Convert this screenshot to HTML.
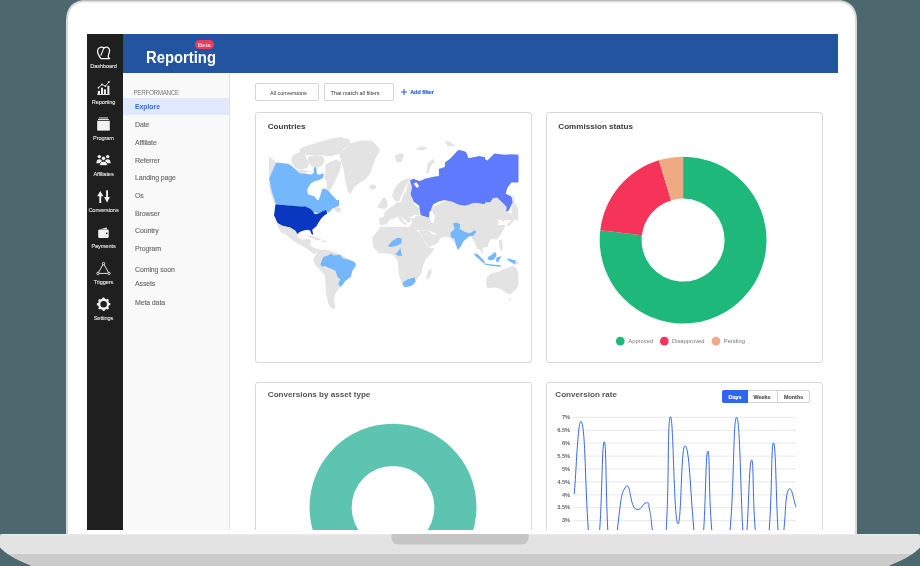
<!DOCTYPE html>
<html><head><meta charset="utf-8">
<style>
*{margin:0;padding:0;box-sizing:border-box}
html,body{width:920px;height:566px;overflow:hidden;background:#4c676e;font-family:"Liberation Sans",sans-serif}
.abs{position:absolute}
.t{position:absolute;white-space:pre}
#scr{position:absolute;left:0;top:0;width:920px;height:566px;clip-path:inset(34px 82px 36px 87px);will-change:transform}
</style></head>
<body>
<svg class="abs" style="left:0;top:0" width="920" height="566">
<path d="M67,536 L67,21 Q67,1 87,1 L836,1 Q856,1 856,21 L856,536" fill="#fff" stroke="#d8d8d8" stroke-width="2"/>
<defs><linearGradient id="tg" x1="0" y1="0" x2="0" y2="1"><stop offset="0" stop-color="#a6a6a6"/><stop offset="0.45" stop-color="#dadada"/><stop offset="1" stop-color="#fafafa"/></linearGradient></defs><rect x="84" y="0" width="755" height="3" fill="url(#tg)"/>
<defs><clipPath id="bc"><path d="M2,534 L918,534 Q920,534 920,536 L920,547.6 C915,553 906,559 888,566 L32,566 C14,559 5,553 0,547.6 L0,536 Q0,534 2,534 Z"/></clipPath></defs>
<g clip-path="url(#bc)">
<rect x="0" y="534" width="920" height="32" fill="#e3e3e3"/>
<rect x="0" y="554" width="920" height="12" fill="#cbcbcb"/>
<rect x="0" y="534" width="920" height="1" fill="#ebebeb"/><rect x="0" y="552.8" width="920" height="1.2" fill="#e6e6e6"/>
</g>
<path d="M391.5,534 L528.5,534 L528.5,537 Q528.5,544.5 521,544.5 L399,544.5 Q391.5,544.5 391.5,537 Z" fill="#c5c5c5"/>
</svg>
<div id="scr">
<div class="abs" style="left:87px;top:34px;width:751px;height:496px;background:#fff"></div>
<div class="abs" style="left:87px;top:34px;width:36px;height:496px;background:#1f1f1f"></div>
<div class="abs" style="left:123px;top:34px;width:715px;height:38.5px;background:#23549f"></div>
<div class="abs" style="left:123px;top:72.5px;width:107px;height:460px;background:#f9f9f9;border-right:1px solid #e3e3e3"></div>
<div class="abs" style="left:123px;top:98px;width:106px;height:16.8px;background:#dfe9fb"></div>
<div class="t" style="left:103.50px;transform:translateX(-50%);top:63.56px;font-size:5.6px;line-height:5.6px;font-weight:normal;color:#e6e6e6;letter-spacing:-0.08px;-webkit-text-stroke:0.1px #e6e6e6">Dashboard</div>
<div class="t" style="left:103.50px;transform:translateX(-50%);top:99.56px;font-size:5.6px;line-height:5.6px;font-weight:normal;color:#e6e6e6;letter-spacing:-0.08px;-webkit-text-stroke:0.1px #e6e6e6">Reporting</div>
<div class="t" style="left:103.50px;transform:translateX(-50%);top:135.56px;font-size:5.6px;line-height:5.6px;font-weight:normal;color:#e6e6e6;letter-spacing:-0.08px;-webkit-text-stroke:0.1px #e6e6e6">Program</div>
<div class="t" style="left:103.50px;transform:translateX(-50%);top:171.56px;font-size:5.6px;line-height:5.6px;font-weight:normal;color:#e6e6e6;letter-spacing:-0.08px;-webkit-text-stroke:0.1px #e6e6e6">Affiliates</div>
<div class="t" style="left:103.50px;transform:translateX(-50%);top:207.56px;font-size:5.6px;line-height:5.6px;font-weight:normal;color:#e6e6e6;letter-spacing:-0.08px;-webkit-text-stroke:0.1px #e6e6e6">Conversions</div>
<div class="t" style="left:103.50px;transform:translateX(-50%);top:243.56px;font-size:5.6px;line-height:5.6px;font-weight:normal;color:#e6e6e6;letter-spacing:-0.08px;-webkit-text-stroke:0.1px #e6e6e6">Payments</div>
<div class="t" style="left:103.50px;transform:translateX(-50%);top:279.56px;font-size:5.6px;line-height:5.6px;font-weight:normal;color:#e6e6e6;letter-spacing:-0.08px;-webkit-text-stroke:0.1px #e6e6e6">Triggers</div>
<div class="t" style="left:103.50px;transform:translateX(-50%);top:315.56px;font-size:5.6px;line-height:5.6px;font-weight:normal;color:#e6e6e6;letter-spacing:-0.08px;-webkit-text-stroke:0.1px #e6e6e6">Settings</div>
<svg class="abs" style="left:87px;top:34px" width="36" height="290" fill="none" stroke="#f2f2f2">
<g transform="translate(7,10)">
<path d="M7,14.6 C5,12.2 3.2,8.6 3.7,6 C4.2,3.2 8,2.4 10,4 C12,2.2 15.7,3 15.6,6.6 C15.5,9.2 13.9,11 14.3,13.2 L15.6,14.6 Z" stroke-width="1.3" stroke-linejoin="round"/>
<path d="M9.9,3.9 L6.8,11.6" stroke-width="1.2"/>
</g>
<g transform="translate(0,40)" fill="#f2f2f2" stroke="none">
<rect x="10.8" y="16.9" width="2.2" height="3.3"/>
<rect x="14" y="13.7" width="2" height="6.5"/>
<rect x="16.9" y="15.3" width="2" height="4.9"/>
<rect x="20.4" y="11.8" width="2" height="8.4"/>
<rect x="10.2" y="20" width="12.4" height="0.9"/>
<path d="M11.5,13.7 L15,10.5 L18.4,12.1 L21.9,8" stroke="#f2f2f2" stroke-width="0.8" fill="none"/>
<circle cx="11.5" cy="13.7" r="0.9"/><circle cx="15" cy="10.5" r="0.9"/><circle cx="18.4" cy="12.1" r="0.9"/><circle cx="21.9" cy="8" r="0.9"/>
</g>
<g transform="translate(-87,-34)" fill="#f2f2f2" stroke="none">
<rect x="98.8" y="117.5" width="9.2" height="0.9"/>
<rect x="98" y="119.1" width="10.8" height="0.9"/>
<rect x="97.2" y="120.8" width="12.6" height="9.8"/>
<circle cx="99.3" cy="156.6" r="1.7"/><circle cx="107.7" cy="156.6" r="1.7"/>
<path d="M96.4,163.2 Q96.4,159.3 99.3,159.3 Q101.6,159.3 102,161 L102,163.2 Z"/>
<path d="M110.6,163.2 Q110.6,159.3 107.7,159.3 Q105.4,159.3 105,161 L105,163.2 Z"/>
<circle cx="103.5" cy="158.4" r="2.1" stroke="#1f1f1f" stroke-width="0.7"/>
<path d="M99.6,165.6 Q99.6,161.2 103.5,161.2 Q107.4,161.2 107.4,165.6 Z" stroke="#1f1f1f" stroke-width="0.7"/>
<rect x="99.3" y="195" width="1.9" height="8"/>
<path d="M97.2,196.2 L100.25,190.9 L103.3,196.2 Z"/>
<rect x="106.1" y="190.3" width="1.9" height="7.6"/>
<path d="M104.1,197 L107.05,202.4 L110,197 Z"/>
<path d="M98.2,231 Q98.2,229.6 99.6,229.6 L107.4,229.6 Q108.7,229.6 108.7,231 L108.7,236.8 Q108.7,238.1 107.4,238.1 L99.6,238.1 Q98.2,238.1 98.2,236.8 Z"/>
<path d="M100.2,229.2 L106.6,227.6 L107.2,229.2 Z"/>
<rect x="106" y="232.6" width="1.4" height="1.4" fill="#1f1f1f"/>
</g>
<g transform="translate(-87,-34)" fill="none" stroke="#f2f2f2">
<path d="M103.5,263.6 L98,273.4 L109,273.4 Z" stroke-width="0.9"/>
<circle cx="103.5" cy="263.6" r="1.2" fill="#1f1f1f" stroke-width="0.9"/>
<circle cx="98" cy="273.4" r="1.2" fill="#1f1f1f" stroke-width="0.9"/>
<circle cx="109" cy="273.4" r="1.2" fill="#1f1f1f" stroke-width="0.9"/>
<circle cx="103.6" cy="304.2" r="4.45" stroke-width="2.3"/>
<g stroke="none" fill="#f2f2f2"><rect x="102.3" y="297.5" width="2.4" height="2.6" rx="0.7" transform="rotate(0 103.6 304.2)"/><rect x="102.3" y="297.5" width="2.4" height="2.6" rx="0.7" transform="rotate(45 103.6 304.2)"/><rect x="102.3" y="297.5" width="2.4" height="2.6" rx="0.7" transform="rotate(90 103.6 304.2)"/><rect x="102.3" y="297.5" width="2.4" height="2.6" rx="0.7" transform="rotate(135 103.6 304.2)"/><rect x="102.3" y="297.5" width="2.4" height="2.6" rx="0.7" transform="rotate(180 103.6 304.2)"/><rect x="102.3" y="297.5" width="2.4" height="2.6" rx="0.7" transform="rotate(225 103.6 304.2)"/><rect x="102.3" y="297.5" width="2.4" height="2.6" rx="0.7" transform="rotate(270 103.6 304.2)"/><rect x="102.3" y="297.5" width="2.4" height="2.6" rx="0.7" transform="rotate(315 103.6 304.2)"/></g>
</g>
</svg>
<div class="t" style="left:145.60px;top:50.29px;font-size:15.6px;line-height:15.6px;font-weight:bold;color:#fff;transform:scaleX(0.95);transform-origin:0 0">Reporting</div>
<div class="abs" style="left:194.6px;top:40.3px;width:19.3px;height:8.7px;border-radius:4.35px;background:#ee3a5e"></div>
<div class="t" style="left:204.30px;transform:translateX(-50%);top:42.25px;font-size:6.2px;line-height:6.2px;font-weight:normal;color:#fff;">Beta</div>
<div class="t" style="left:133.50px;top:89.57px;font-size:6.3px;line-height:6.3px;font-weight:normal;color:#7a7a7a;letter-spacing:-0.33px">PERFORMANCE</div>
<div class="t" style="left:135.00px;top:103.74px;font-size:6.8px;line-height:6.8px;font-weight:bold;color:#3a68e8;">Explore</div>
<div class="t" style="left:135.00px;top:121.27px;font-size:7px;line-height:7px;font-weight:normal;color:#6a6a6a;letter-spacing:-0.13px;-webkit-text-stroke:0.12px #6a6a6a">Date</div>
<div class="t" style="left:135.00px;top:138.87px;font-size:7px;line-height:7px;font-weight:normal;color:#6a6a6a;letter-spacing:-0.13px;-webkit-text-stroke:0.12px #6a6a6a">Affiliate</div>
<div class="t" style="left:135.00px;top:156.57px;font-size:7px;line-height:7px;font-weight:normal;color:#6a6a6a;letter-spacing:-0.13px;-webkit-text-stroke:0.12px #6a6a6a">Referrer</div>
<div class="t" style="left:135.00px;top:174.27px;font-size:7px;line-height:7px;font-weight:normal;color:#6a6a6a;letter-spacing:-0.13px;-webkit-text-stroke:0.12px #6a6a6a">Landing page</div>
<div class="t" style="left:135.00px;top:191.97px;font-size:7px;line-height:7px;font-weight:normal;color:#6a6a6a;letter-spacing:-0.13px;-webkit-text-stroke:0.12px #6a6a6a">Os</div>
<div class="t" style="left:135.00px;top:209.67px;font-size:7px;line-height:7px;font-weight:normal;color:#6a6a6a;letter-spacing:-0.13px;-webkit-text-stroke:0.12px #6a6a6a">Browser</div>
<div class="t" style="left:135.00px;top:227.37px;font-size:7px;line-height:7px;font-weight:normal;color:#6a6a6a;letter-spacing:-0.13px;-webkit-text-stroke:0.12px #6a6a6a">Country</div>
<div class="t" style="left:135.00px;top:245.37px;font-size:7px;line-height:7px;font-weight:normal;color:#6a6a6a;letter-spacing:-0.13px;-webkit-text-stroke:0.12px #6a6a6a">Program</div>
<div class="t" style="left:135.00px;top:265.87px;font-size:7px;line-height:7px;font-weight:normal;color:#6a6a6a;letter-spacing:-0.13px;-webkit-text-stroke:0.12px #6a6a6a">Coming soon</div>
<div class="t" style="left:135.00px;top:280.27px;font-size:7px;line-height:7px;font-weight:normal;color:#6a6a6a;letter-spacing:-0.13px;-webkit-text-stroke:0.12px #6a6a6a">Assets</div>
<div class="t" style="left:135.00px;top:298.77px;font-size:7px;line-height:7px;font-weight:normal;color:#6a6a6a;letter-spacing:-0.13px;-webkit-text-stroke:0.12px #6a6a6a">Meta data</div>
<div class="abs" style="left:254.5px;top:83.3px;width:64.2px;height:18.2px;border:1px solid #d4d4d4;border-radius:2px;background:#fff"></div>
<div class="abs" style="left:324.2px;top:83.3px;width:70.3px;height:18.2px;border:1px solid #d4d4d4;border-radius:2px;background:#fff"></div>
<div class="t" style="left:270.00px;top:91.17px;font-size:5.47px;line-height:5.47px;font-weight:normal;color:#333;">All conversions</div>
<div class="t" style="left:330.60px;top:91.17px;font-size:5.47px;line-height:5.47px;font-weight:normal;color:#333;">That match all filters</div>
<div class="t" style="left:410.20px;top:90.40px;font-size:5.43px;line-height:5.43px;font-weight:bold;color:#2f5ff0;-webkit-text-stroke:0.2px #2f5ff0">Add filter</div>
<svg class="abs" style="left:400px;top:88px" width="8" height="8"><path d="M1,4H7M4,1V7" stroke="#2f5fe0" stroke-width="1.1"/></svg>
<div class="abs" style="left:254.5px;top:112px;width:277.3px;height:251px;border:1px solid #d8d8d8;border-radius:3px;background:#fff"></div>
<div class="abs" style="left:545.5px;top:112px;width:277.3px;height:251px;border:1px solid #d8d8d8;border-radius:3px;background:#fff"></div>
<div class="abs" style="left:254.5px;top:382px;width:277.3px;height:200px;border:1px solid #d8d8d8;border-radius:3px;background:#fff"></div>
<div class="abs" style="left:545.5px;top:381.5px;width:277.3px;height:200px;border:1px solid #d8d8d8;border-radius:3px;background:#fff"></div>
<div class="t" style="left:267.70px;top:123.14px;font-size:8.1px;line-height:8.1px;font-weight:bold;color:#3a3a3a;">Countries</div>
<div class="t" style="left:558.30px;top:123.14px;font-size:8.1px;line-height:8.1px;font-weight:bold;color:#3a3a3a;">Commission status</div>
<div class="t" style="left:267.80px;top:391.14px;font-size:8.1px;line-height:8.1px;font-weight:bold;color:#555;">Conversions by asset type</div>
<div class="t" style="left:555.30px;top:391.14px;font-size:8.1px;line-height:8.1px;font-weight:bold;color:#555;">Conversion rate</div>
<svg class="abs" style="left:0;top:0" width="920" height="566">
<defs><clipPath id="mc"><rect x="268.9" y="120" width="249.6" height="200"/></clipPath></defs>
<g clip-path="url(#mc)">
<path d="M299.46,148.68 L307.23,145.43 L315.71,143.31 L324.19,140.48 L332.67,138.36 L342.00,136.95 L342.00,149.67 L339.03,153.91 L332.67,155.75 L327.02,156.31 L321.36,155.04 L315.71,154.90 L310.06,155.04 L304.40,154.61 L300.16,151.79Z" fill="#e3e3e3"/>
<path d="M291.68,156.73 L296.63,153.20 L301.58,151.79 L305.11,154.61 L307.23,159.56 L309.35,162.39 L307.94,167.34 L302.99,169.46 L297.34,169.46 L294.51,167.05 L291.68,163.10Z" fill="#e3e3e3"/>
<path d="M307.94,156.73 L314.30,155.04 L322.07,155.75 L324.90,160.27 L322.78,165.22 L318.54,167.34 L312.18,166.63 L308.64,163.10Z" fill="#e3e3e3"/>
<path d="M324.90,165.22 L329.84,161.68 L336.91,159.56 L341.15,162.39 L340.45,168.75 L336.91,177.23 L333.38,184.30 L329.84,191.36 L326.31,189.24 L327.02,182.88 L324.19,177.23 L325.60,171.58Z" fill="#e3e3e3"/>
<path d="M297.34,169.88 L304.40,170.16 L310.76,171.86 L314.58,167.34 L315.71,169.03 L304.40,173.27 L298.04,172.99Z" fill="#e3e3e3"/>
<path d="M268.90,156.37 L276.32,162.20 L269.43,178.12 L268.90,183.95 L271.55,186.07 L273.14,194.56 L275.79,201.99 L276.32,205.17 L274.20,203.05 L271.02,194.56 L268.90,185.01Z" fill="#e3e3e3"/>
<path d="M276.13,162.39 L288.15,163.80 L291.68,165.92 L296.63,170.16 L299.03,173.27 L304.40,173.41 L311.47,174.40 L313.59,172.71 L314.01,167.34 L315.43,166.77 L316.56,169.03 L316.84,174.12 L319.95,174.69 L322.49,173.27 L323.91,174.40 L322.78,177.94 L319.24,180.06 L315.71,180.76 L311.47,182.88 L308.64,186.42 L307.23,189.95 L307.94,194.19 L314.30,196.31 L317.12,199.84 L317.83,202.67 L319.24,198.43 L320.66,194.19 L322.07,189.24 L324.19,188.54 L327.72,189.95 L331.26,194.19 L335.50,198.43 L339.03,204.08 L335.50,206.91 L328.43,209.03 L325.60,212.00 L310.06,208.33 L276.13,204.08 L272.60,194.19 L270.48,185.71 L269.07,178.64Z" fill="#74b7fb"/>
<path d="M310.06,200.00 L339.03,200.00 L339.03,205.65 L332.67,208.48 L328.43,212.72 L326.31,209.89 L322.78,212.01 L318.54,213.43 L313.59,212.01 L310.06,209.19Z" fill="#74b7fb"/>
<path d="M332.67,208.48 L339.03,207.07 L342.00,209.89 L338.33,212.72Z" fill="#e3e3e3"/>
<path d="M275.43,204.24 L302.99,206.78 L304.40,206.36 L310.06,208.48 L312.88,211.31 L315.00,214.13 L318.54,213.43 L322.78,211.31 L326.31,209.89 L327.30,213.43 L324.19,215.55 L321.36,218.37 L318.54,222.61 L316.42,226.15 L312.18,229.68 L313.31,234.63 L311.47,233.92 L310.06,230.39 L307.23,229.68 L303.70,230.39 L300.16,231.80 L297.34,233.92 L294.51,230.39 L289.56,227.56 L283.20,226.15 L277.55,223.32 L275.43,218.37 L274.01,215.55Z" fill="#0a37c0"/>
<path d="M276.84,222.61 L281.79,225.44 L290.27,227.56 L295.22,230.39 L297.34,233.92 L298.47,237.03 L302.28,240.28 L306.52,238.45 L310.06,239.58 L311.47,242.40 L309.35,244.52 L312.18,246.64 L316.42,248.76 L320.66,249.75 L322.07,252.01 L318.54,253.00 L314.30,251.59 L309.35,249.47 L303.70,246.64 L298.04,243.82 L292.39,240.28 L287.44,236.04 L283.20,231.80 L279.67,227.56 L277.27,225.44Z" fill="#e3e3e3"/>
<path d="M277.55,224.03 L283.20,231.80 L284.61,234.20 L281.79,233.36 L278.25,227.56Z" fill="#e3e3e3"/>
<path d="M307.23,235.34 L312.88,236.04 L318.54,238.16 L321.36,239.86 L317.83,240.42 L311.47,237.88 L307.23,236.47Z" fill="#e3e3e3"/>
<path d="M322.07,240.28 L327.02,240.71 L326.31,242.40 L322.49,242.12Z" fill="#e3e3e3"/>
<path d="M300.00,241.41 L308.48,245.65 L314.13,249.89 L318.37,251.31 L314.13,254.13 L308.48,249.89 L302.83,245.65Z" fill="#e3e3e3"/>
<path d="M314.13,256.96 L318.37,251.31 L324.03,249.19 L331.10,251.31 L338.16,253.43 L342.40,255.55 L349.47,259.79 L355.12,262.61 L355.83,265.44 L352.30,271.10 L350.88,276.75 L345.23,280.99 L340.99,286.64 L338.16,289.47 L335.34,293.71 L333.92,300.78 L335.34,307.84 L332.51,309.26 L328.27,303.60 L326.15,293.71 L325.44,282.40 L324.73,275.34 L321.20,271.10 L315.55,265.44 L313.43,261.20Z" fill="#e3e3e3"/>
<path d="M320.49,264.03 L323.32,256.96 L328.27,255.55 L331.10,253.43 L333.92,255.55 L340.28,254.84 L342.40,258.37 L349.47,259.79 L355.12,262.61 L355.83,265.44 L352.30,271.10 L350.88,276.75 L345.23,280.99 L342.40,285.23 L340.28,286.64 L338.16,283.82 L340.28,279.58 L337.46,276.75 L335.34,270.39 L329.68,268.27 L325.44,266.15 L321.20,266.15Z" fill="#74b7fb"/>
<path d="M335.00,140.48 L340.65,137.65 L349.13,139.07 L350.55,143.31 L343.48,148.96 L339.24,153.20 L335.00,153.20Z" fill="#e3e3e3"/>
<path d="M339.24,153.20 L346.31,147.55 L350.55,143.31 L360.44,140.48 L371.75,140.48 L377.40,146.13 L380.23,150.37 L375.99,157.44 L373.16,164.51 L370.34,172.99 L366.10,178.64 L357.61,184.30 L353.37,188.54 L350.55,194.19 L347.72,191.36 L344.89,178.64 L343.48,168.75 L340.65,160.27Z" fill="#e3e3e3"/>
<path d="M368.92,185.71 L373.16,184.30 L376.70,186.42 L374.58,189.24 L370.34,189.24Z" fill="#e3e3e3"/>
<path d="M394.36,156.03 L400.02,153.20 L404.26,154.61 L401.43,161.68 L397.19,162.39Z" fill="#e3e3e3"/>
<path d="M391.96,195.44 L393.55,191.20 L396.20,185.90 L400.44,181.66 L405.21,179.01 L409.98,177.95 L409.98,180.07 L407.86,182.72 L405.74,185.90 L403.62,191.20 L401.50,195.44 L399.38,200.74 L396.20,201.80 L394.08,199.68Z" fill="#e3e3e3"/>
<path d="M405.74,191.73 L412.10,193.85 L411.57,199.15 L405.74,200.21 L400.97,201.80 L403.09,195.44Z" fill="#e3e3e3"/>
<path d="M406.80,185.90 L409.98,180.60 L411.57,183.78 L412.95,189.08 L411.57,194.38 L407.86,195.44 L405.74,192.26Z" fill="#e3e3e3"/>
<path d="M382.42,198.62 L385.60,197.56 L387.19,201.80 L387.72,207.10 L384.54,209.22 L380.30,208.16 L379.24,203.92Z" fill="#e3e3e3"/>
<path d="M377.65,205.51 L379.77,204.45 L380.83,207.63 L378.18,208.38Z" fill="#e3e3e3"/>
<path d="M384.54,212.40 L388.78,208.16 L394.08,204.98 L396.20,202.86 L401.50,201.80 L405.74,199.68 L411.04,197.56 L411.57,199.15 L414.22,203.92 L417.40,207.10 L421.64,209.22 L422.70,212.40 L420.58,214.52 L417.40,215.58 L414.22,214.52 L412.10,216.64 L408.92,216.64 L406.80,220.89 L403.62,218.76 L400.44,215.58 L397.26,216.64 L393.02,218.76 L389.84,219.83 L385.60,224.07 L380.30,225.13 L379.24,219.83 L383.48,216.64Z" fill="#e3e3e3"/>
<path d="M379.24,217.70 L388.78,216.64 L389.84,219.83 L386.66,224.07 L381.36,225.13 L379.24,221.95Z" fill="#e3e3e3"/>
<path d="M397.26,216.64 L400.44,215.58 L403.62,220.89 L406.80,224.07 L404.68,225.13 L400.44,220.89Z" fill="#e3e3e3"/>
<path d="M405.74,217.70 L409.98,217.17 L411.57,219.83 L408.92,223.01 L406.80,221.95Z" fill="#e3e3e3"/>
<path d="M413.16,220.89 L425.89,219.83 L430.13,218.23 L435.00,219.83 L435.00,230.00 L409.98,230.00 L409.98,225.13Z" fill="#e3e3e3"/>
<path d="M411.64,218.16 L422.95,217.46 L424.36,221.70 L415.88,223.11 L411.64,221.70Z" fill="#e3e3e3"/>
<path d="M420.12,218.16 L428.60,217.46 L432.84,219.58 L439.91,208.27 L445.00,205.44 L445.00,236.54 L441.33,237.95 L435.67,233.71 L431.43,229.47 L425.78,226.64 L418.71,226.64Z" fill="#e3e3e3"/>
<path d="M372.07,237.72 L377.72,230.65 L380.55,226.41 L397.51,227.12 L411.64,227.12 L418.71,232.07 L424.36,240.55 L428.60,247.61 L434.26,248.32 L431.43,253.27 L425.78,258.92 L422.95,265.99 L421.54,273.06 L417.30,278.71 L414.47,284.36 L407.40,287.19 L403.16,287.19 L401.04,281.54 L398.92,274.47 L398.22,267.40 L397.51,260.34 L393.27,254.68 L384.79,253.27 L379.13,253.27 L373.48,247.61Z" fill="#e3e3e3"/>
<path d="M419.13,230.23 L427.61,230.23 L433.27,234.61 L441.75,236.02 L437.51,242.95 L429.03,247.33 L426.20,242.95 L419.13,231.64Z" fill="#e3e3e3"/>
<path d="M425.78,277.30 L428.60,270.23 L431.43,268.82 L431.43,273.06 L428.60,279.42Z" fill="#e3e3e3"/>
<path d="M402.46,282.95 L407.40,279.42 L414.47,277.30 L415.60,281.54 L411.64,285.78 L404.58,287.19Z" fill="#74b7fb"/>
<path d="M387.61,246.20 L391.86,241.25 L397.51,237.72 L401.75,238.43 L401.47,243.37 L397.51,245.49 L391.15,246.91Z" fill="#74b7fb"/>
<path d="M395.39,253.98 L398.92,250.44 L400.34,247.61 L401.04,251.86 L402.03,256.10 L397.51,255.39Z" fill="#74b7fb"/>
<path d="M415.00,216.20 L423.48,216.20 L429.13,217.61 L430.55,207.72 L440.44,203.48 L446.10,200.65 L457.40,203.48 L464.47,206.31 L478.60,202.77 L495.00,200.65 L495.00,237.40 L491.33,237.40 L485.67,240.23 L484.26,244.47 L481.43,250.12 L477.19,248.71 L474.36,241.64 L471.54,237.40 L468.71,234.58 L461.64,243.06 L457.40,250.12 L454.58,243.06 L450.34,237.40 L443.27,235.99 L437.61,234.58 L431.96,231.75 L427.72,230.34 L423.48,228.92 L419.24,224.68 L415.00,223.27Z" fill="#e3e3e3"/>
<path d="M445.00,199.36 L452.07,200.78 L459.13,203.60 L466.20,205.02 L476.10,202.19 L490.23,202.19 L493.06,197.95 L497.30,197.95 L504.36,205.02 L505.78,212.08 L511.43,213.50 L514.26,220.00 L445.00,220.00Z" fill="#e3e3e3"/>
<path d="M512.84,200.78 L516.38,205.02 L518.50,210.67 L518.50,220.00 L514.96,220.00 L511.43,213.50Z" fill="#e3e3e3"/>
<path d="M471.86,233.48 L477.51,232.07 L485.99,230.65 L498.71,225.00 L505.78,225.00 L501.54,233.48 L497.30,239.13 L490.23,239.13 L487.40,247.61 L483.16,246.20 L482.46,254.68 L480.34,250.44 L478.92,249.03 L477.51,243.37 L473.27,239.13Z" fill="#e3e3e3"/>
<path d="M498.71,240.55 L501.54,239.13 L502.95,246.20 L501.54,251.86 L499.42,247.61Z" fill="#e3e3e3"/>
<path d="M514.96,260.34 L519.20,262.03 L518.50,264.58 L514.96,264.58Z" fill="#e3e3e3"/>
<path d="M486.70,277.30 L491.64,273.06 L498.71,271.64 L504.36,268.82 L508.60,267.40 L512.84,265.99 L515.67,267.40 L518.50,273.06 L519.20,284.36 L515.67,290.02 L510.02,294.26 L505.78,292.84 L501.54,289.31 L494.47,287.19 L487.40,288.60 L485.99,284.36Z" fill="#e3e3e3"/>
<path d="M507.90,298.50 L511.43,298.50 L510.02,301.33Z" fill="#e3e3e3"/>
<path d="M426.20,173.16 L427.61,163.27 L433.27,159.03 L434.68,161.86 L430.44,166.10 L429.03,173.16Z" fill="#e3e3e3"/>
<path d="M414.89,149.13 L421.96,146.31 L427.61,147.72 L423.37,150.55Z" fill="#e3e3e3"/>
<path d="M444.58,140.65 L450.23,142.07 L455.88,146.31 L447.40,146.31Z" fill="#e3e3e3"/>
<path d="M409.95,180.23 L413.48,178.82 L419.13,180.94 L421.96,180.23 L424.79,178.82 L433.27,176.70 L438.92,175.99 L438.92,168.92 L443.16,167.51 L447.40,166.10 L450.23,160.44 L457.30,154.79 L458.71,149.84 L464.36,151.25 L467.19,154.79 L468.60,159.03 L472.84,157.61 L478.50,156.20 L485.00,156.91 L485.00,204.26 L475.67,202.84 L468.60,205.67 L461.54,205.67 L451.64,201.43 L444.58,200.02 L438.92,201.43 L433.27,204.26 L431.43,208.22 L430.02,213.87 L428.60,217.54 L420.83,215.28 L419.13,205.67 L413.48,201.43 L410.65,194.36 L412.07,187.30Z" fill="#607afe"/>
<path d="M445.00,162.61 L450.65,158.37 L457.72,150.60 L466.20,152.01 L467.61,158.37 L480.34,156.25 L487.40,160.49 L494.47,153.43 L504.36,154.84 L511.43,154.13 L519.91,154.84 L519.91,182.40 L511.43,182.40 L507.19,188.06 L505.78,193.71 L511.43,196.54 L512.84,202.19 L508.60,210.67 L505.78,212.08 L504.36,205.02 L497.30,197.95 L493.06,197.95 L490.23,202.19 L476.10,202.19 L466.20,205.02 L459.13,203.60 L452.07,200.78 L445.00,199.36Z" fill="#607afe"/>
<path d="M413.48,183.76 L416.31,182.35 L419.13,185.88 L417.01,188.00Z" fill="#ffffff"/>
<path d="M429.13,211.96 L431.96,210.55 L434.79,216.20 L433.37,223.27 L430.55,221.86Z" fill="#ffffff"/>
<path d="M460.00,204.84 L464.24,205.90 L468.48,204.84 L473.78,202.72 L478.02,203.78 L483.32,204.31 L488.62,203.25 L492.86,200.60 L493.92,197.95 L497.10,197.42 L500.28,200.60 L504.52,204.84 L506.64,206.96 L506.11,212.26 L504.52,216.50 L500.28,218.62 L495.51,218.62 L499.22,221.80 L497.10,226.04 L499.22,230.28 L494.98,235.58 L489.68,238.76 L487.03,239.83 L487.56,245.13 L484.38,247.78 L479.08,246.19 L475.90,240.89 L472.72,236.64 L460.00,236.64Z" fill="#e3e3e3"/>
<path d="M506.64,224.98 L509.83,221.80 L513.01,218.62 L515.13,214.38 L517.25,209.08 L518.84,210.67 L516.19,216.50 L513.01,221.80 L508.76,226.04Z" fill="#e3e3e3"/>
<path d="M501.87,218.09 L504.52,218.62 L504.52,221.80 L502.40,221.80Z" fill="#e3e3e3"/>
<path d="M511.95,195.30 L514.07,196.36 L514.60,202.72 L513.01,203.78Z" fill="#e3e3e3"/>
<path d="M453.16,223.27 L457.40,222.56 L460.23,224.68 L459.52,228.92 L464.47,231.75 L468.71,233.16 L471.54,232.46 L474.36,230.34 L476.48,231.75 L472.95,235.99 L469.42,235.99 L463.06,241.64 L460.23,247.30 L458.11,250.12 L455.99,244.47 L454.58,238.82 L451.04,237.40 L450.34,233.16 L454.58,228.92 L453.87,226.10Z" fill="#74b7fb"/>
<path d="M473.98,253.27 L477.51,253.98 L482.46,258.92 L485.28,262.46 L483.16,262.88 L478.92,258.92 L475.39,256.10Z" fill="#74b7fb"/>
<path d="M483.87,263.16 L491.64,264.58 L501.54,265.28 L500.12,266.70 L491.64,265.99 L484.58,264.58Z" fill="#74b7fb"/>
<path d="M487.40,257.51 L491.64,254.68 L495.18,251.86 L496.59,255.39 L493.76,259.63 L488.82,260.34Z" fill="#74b7fb"/>
<path d="M496.59,257.51 L499.42,256.80 L501.54,256.10 L499.42,259.63 L498.00,262.46 L495.88,261.04Z" fill="#74b7fb"/>
<path d="M507.19,258.22 L512.84,259.63 L515.67,260.34 L514.96,264.58 L511.43,262.46 L507.90,260.34Z" fill="#74b7fb"/>
</g></svg>
<svg class="abs" style="left:0;top:0" width="920" height="566"><path d="M683.10,156.70 A83.4,83.4 0 1 1 600.27,230.37 L641.88,235.26 A41.5,41.5 0 1 0 683.10,198.60Z" fill="#1eb97a"/><path d="M600.27,230.37 A83.4,83.4 0 0 1 658.86,160.30 L671.04,200.39 A41.5,41.5 0 0 0 641.88,235.26Z" fill="#f6345a"/><path d="M658.86,160.30 A83.4,83.4 0 0 1 683.10,156.70 L683.10,198.60 A41.5,41.5 0 0 0 671.04,200.39Z" fill="#efa983"/><circle cx="620.3" cy="341.1" r="4.4" fill="#1eb97a"/><circle cx="664.3" cy="341.1" r="4.4" fill="#f6345a"/><circle cx="716" cy="341.1" r="4.4" fill="#efa983"/><path fill-rule="evenodd" fill="#5cc4b0" d="M393,423.7 A83.5,83.5 0 1 1 393,590.7 A83.5,83.5 0 1 1 393,423.7Z M393,465.9 A41.4,41.4 0 1 0 393,548.7 A41.4,41.4 0 1 0 393,465.9Z"/></svg>
<div class="t" style="left:628.30px;top:339.49px;font-size:5.8px;line-height:5.8px;font-weight:normal;color:#777;">Approved</div>
<div class="t" style="left:672.00px;top:339.49px;font-size:5.8px;line-height:5.8px;font-weight:normal;color:#777;">Disapproved</div>
<div class="t" style="left:723.80px;top:339.49px;font-size:5.8px;line-height:5.8px;font-weight:normal;color:#777;">Pending</div>
<div class="abs" style="left:722.1px;top:389.5px;width:87.6px;height:13.3px;border:1px solid #d2d2d2;border-radius:2px;background:#fff"></div>
<div class="abs" style="left:722.1px;top:389.5px;width:26.1px;height:13.3px;border-radius:2px 0 0 2px;background:#3065f2"></div>
<div class="abs" style="left:777px;top:389.5px;width:1px;height:13.3px;background:#d2d2d2"></div>
<div class="t" style="left:735.00px;transform:translateX(-50%);top:395.03px;font-size:5.4px;line-height:5.4px;font-weight:bold;color:#fff;-webkit-text-stroke:0.15px #fff">Days</div>
<div class="t" style="left:762.00px;transform:translateX(-50%);top:395.03px;font-size:5.4px;line-height:5.4px;font-weight:bold;color:#555;-webkit-text-stroke:0.15px #555">Weeks</div>
<div class="t" style="left:793.60px;transform:translateX(-50%);top:395.03px;font-size:5.4px;line-height:5.4px;font-weight:bold;color:#555;-webkit-text-stroke:0.15px #555">Months</div>
<svg class="abs" style="left:0;top:0" width="920" height="566"><rect x="573.3" y="416.90" width="222.7" height="1" fill="#e8e8e8"/><rect x="573.3" y="429.80" width="222.7" height="1" fill="#e8e8e8"/><rect x="573.3" y="442.70" width="222.7" height="1" fill="#e8e8e8"/><rect x="573.3" y="455.60" width="222.7" height="1" fill="#e8e8e8"/><rect x="573.3" y="468.50" width="222.7" height="1" fill="#e8e8e8"/><rect x="573.3" y="481.40" width="222.7" height="1" fill="#e8e8e8"/><rect x="573.3" y="494.30" width="222.7" height="1" fill="#e8e8e8"/><rect x="573.3" y="507.20" width="222.7" height="1" fill="#e8e8e8"/><rect x="573.3" y="520.10" width="222.7" height="1" fill="#e8e8e8"/><rect x="573.3" y="533.00" width="222.7" height="1" fill="#e8e8e8"/><rect x="573.3" y="545.90" width="222.7" height="1" fill="#e8e8e8"/><path d="M574.20,494.00 C576.20,474.88 577.94,412.70 581.70,422.30 C585.46,431.90 585.02,483.41 588.30,530.00 C591.58,576.59 590.96,597.00 594.00,597.00 C597.04,597.00 596.98,571.39 599.70,530.00 C602.42,488.61 602.04,441.80 604.20,441.80 C606.36,441.80 605.59,488.61 607.80,530.00 C610.01,571.39 609.97,597.00 612.50,597.00 C615.03,597.00 613.75,559.39 617.30,530.00 C620.85,500.61 621.03,492.48 625.80,486.80 C630.57,481.12 629.68,504.43 635.20,508.70 C640.72,512.97 642.69,502.45 646.50,502.80 C650.31,503.15 647.95,502.75 649.50,510.00 C651.05,517.25 649.77,506.80 652.30,530.00 C654.83,553.20 655.29,597.00 659.00,597.00 C662.71,597.00 663.16,578.08 666.20,530.00 C669.24,481.92 667.36,418.46 670.40,416.70 C673.44,414.94 673.68,515.64 677.60,523.40 C681.52,531.16 680.75,444.04 685.10,445.80 C689.45,447.56 690.19,489.68 693.90,530.00 C697.61,570.32 696.39,597.00 699.00,597.00 C701.61,597.00 701.33,568.93 703.70,530.00 C706.07,491.07 705.74,451.00 707.90,451.00 C710.06,451.00 708.31,491.07 711.80,530.00 C715.29,568.93 716.12,597.00 721.00,597.00 C725.88,597.00 725.94,577.89 730.10,530.00 C734.26,482.11 733.21,417.40 736.60,417.40 C739.99,417.40 740.56,491.97 742.80,530.00 C745.04,568.03 743.88,560.00 745.00,560.00 C746.12,560.00 745.24,556.72 747.00,530.00 C748.76,503.28 749.41,459.80 751.60,459.80 C753.79,459.80 752.43,493.41 755.20,530.00 C757.97,566.59 758.27,597.00 762.00,597.00 C765.73,597.00 766.13,571.12 769.20,530.00 C772.27,488.88 771.15,442.80 773.50,442.80 C775.85,442.80 776.00,498.75 778.00,530.00 C780.00,561.25 779.43,560.00 781.00,560.00 C782.57,560.00 781.93,548.72 783.90,530.00 C785.87,511.28 785.17,495.93 788.40,489.80 C791.63,483.67 793.97,502.41 796.00,507.00" fill="none" stroke="#3868f4" stroke-width="1"/></svg>
<div class="t" style="right:349.90px;top:415.17px;font-size:5.7px;line-height:5.7px;font-weight:bold;color:#666;">7%</div>
<div class="t" style="right:349.90px;top:428.07px;font-size:5.7px;line-height:5.7px;font-weight:bold;color:#666;">6.5%</div>
<div class="t" style="right:349.90px;top:440.97px;font-size:5.7px;line-height:5.7px;font-weight:bold;color:#666;">6%</div>
<div class="t" style="right:349.90px;top:453.87px;font-size:5.7px;line-height:5.7px;font-weight:bold;color:#666;">5.5%</div>
<div class="t" style="right:349.90px;top:466.77px;font-size:5.7px;line-height:5.7px;font-weight:bold;color:#666;">5%</div>
<div class="t" style="right:349.90px;top:479.67px;font-size:5.7px;line-height:5.7px;font-weight:bold;color:#666;">4.5%</div>
<div class="t" style="right:349.90px;top:492.57px;font-size:5.7px;line-height:5.7px;font-weight:bold;color:#666;">4%</div>
<div class="t" style="right:349.90px;top:505.47px;font-size:5.7px;line-height:5.7px;font-weight:bold;color:#666;">3.5%</div>
<div class="t" style="right:349.90px;top:518.37px;font-size:5.7px;line-height:5.7px;font-weight:bold;color:#666;">3%</div>
<div class="t" style="right:349.90px;top:531.27px;font-size:5.7px;line-height:5.7px;font-weight:bold;color:#666;">2.5%</div>
<div class="t" style="right:349.90px;top:544.17px;font-size:5.7px;line-height:5.7px;font-weight:bold;color:#666;">2%</div>
</div>
</body></html>
